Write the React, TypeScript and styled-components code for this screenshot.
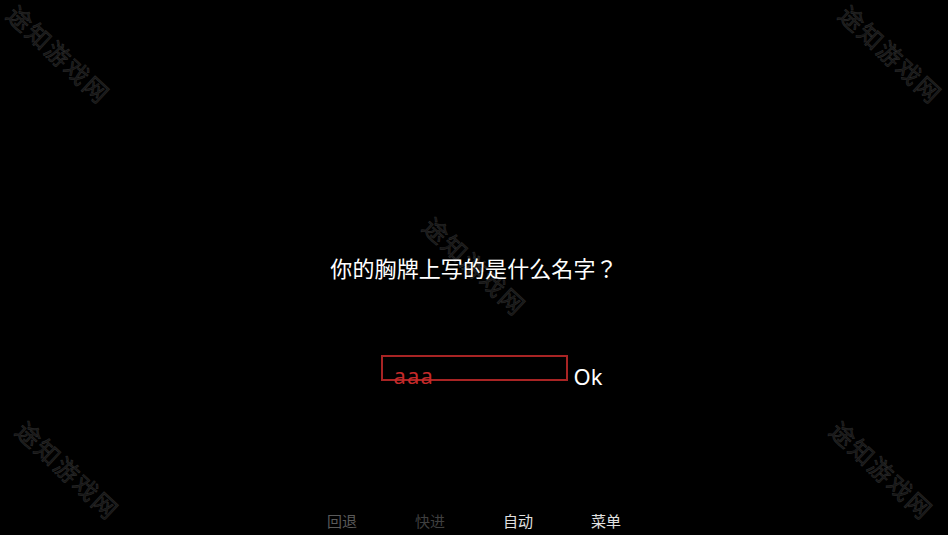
import styled, { createGlobalStyle } from 'styled-components'

const GlobalStyle = createGlobalStyle`
  html, body, #root {
    margin: 0;
    padding: 0;
    height: 100%;
    background: #000000;
  }
  body {
    font-family: "Noto Sans", "Noto Sans CJK SC", sans-serif;
    overflow: hidden;
  }
`

const Stage = styled.div`
  position: relative;
  width: 100%;
  height: 100vh;
  background: #000000;
  display: flex;
  flex-direction: column;
  align-items: center;
  overflow: hidden;
`

const Question = styled.div`
  position: relative;
  z-index: 2;
  margin-top: 252px;
  font-family: "Noto Sans CJK JP", "Noto Sans CJK SC", sans-serif;
  font-size: 22px;
  line-height: 30px;
  color: #ffffff;
  letter-spacing: 0.1px;
`

const InputRow = styled.div`
  position: relative;
  z-index: 2;
  align-self: stretch;
  margin-top: 73px;
  display: grid;
  grid-template-columns: 1fr auto 1fr;
  align-items: start;
`

const InputBox = styled.div`
  box-sizing: border-box;
  width: 187px;
  height: 26px;
  border: 2px solid #a82424;
  padding: 7px 0 0 11px;
  font-size: 22px;
  line-height: 1;
  letter-spacing: 1.2px;
  color: #c42a2a;
  overflow: visible;
  white-space: nowrap;
`

const OkLabel = styled.div`
  margin: 10px 0 0 6px;
  font-size: 22px;
  line-height: 1;
  color: #ffffff;
`

const Menu = styled.nav`
  position: relative;
  z-index: 2;
  margin-top: auto;
  margin-bottom: 3px;
  display: flex;
  gap: 58px;
`

const MenuItem = styled.span<{ $tone: string }>`
  font-family: "Noto Sans CJK SC", sans-serif;
  font-size: 15px;
  line-height: 22px;
  width: 30px;
  color: ${(p) => p.$tone};
`

const Watermark = styled.div<{ $x: number; $y: number }>`
  position: absolute;
  z-index: 1;
  left: ${(p) => p.$x}px;
  top: ${(p) => p.$y}px;
  transform: translate(-50%, -50%) rotate(43deg);
  font-family: "Noto Sans CJK SC", sans-serif;
  font-size: 24px;
  letter-spacing: 2px;
  line-height: 1;
  white-space: nowrap;
  color: #161616;
  -webkit-text-stroke: 0.6px #2a2a2a;
  pointer-events: none;
`

const marks = [
  { x: 59, y: 54 },
  { x: 891, y: 54 },
  { x: 475, y: 266 },
  { x: 68, y: 470 },
  { x: 882, y: 470 }
]

const menu = [
  { label: '回退', tone: '#5a5a5a' },
  { label: '快进', tone: '#3f3f3f' },
  { label: '自动', tone: '#e0e0e0' },
  { label: '菜单', tone: '#e0e0e0' }
]

export default function App() {
  return (
    <>
      <GlobalStyle />
      <Stage>
        {marks.map((m, idx) => (
          <Watermark key={idx} $x={m.x} $y={m.y}>
            途知游戏网
          </Watermark>
        ))}
        <Question>你的胸牌上写的是什么名字？</Question>
        <InputRow>
          <span />
          <InputBox>aaa</InputBox>
          <OkLabel>Ok</OkLabel>
        </InputRow>
        <Menu>
          {menu.map((item) => (
            <MenuItem key={item.label} $tone={item.tone}>
              {item.label}
            </MenuItem>
          ))}
        </Menu>
      </Stage>
    </>
  )
}
